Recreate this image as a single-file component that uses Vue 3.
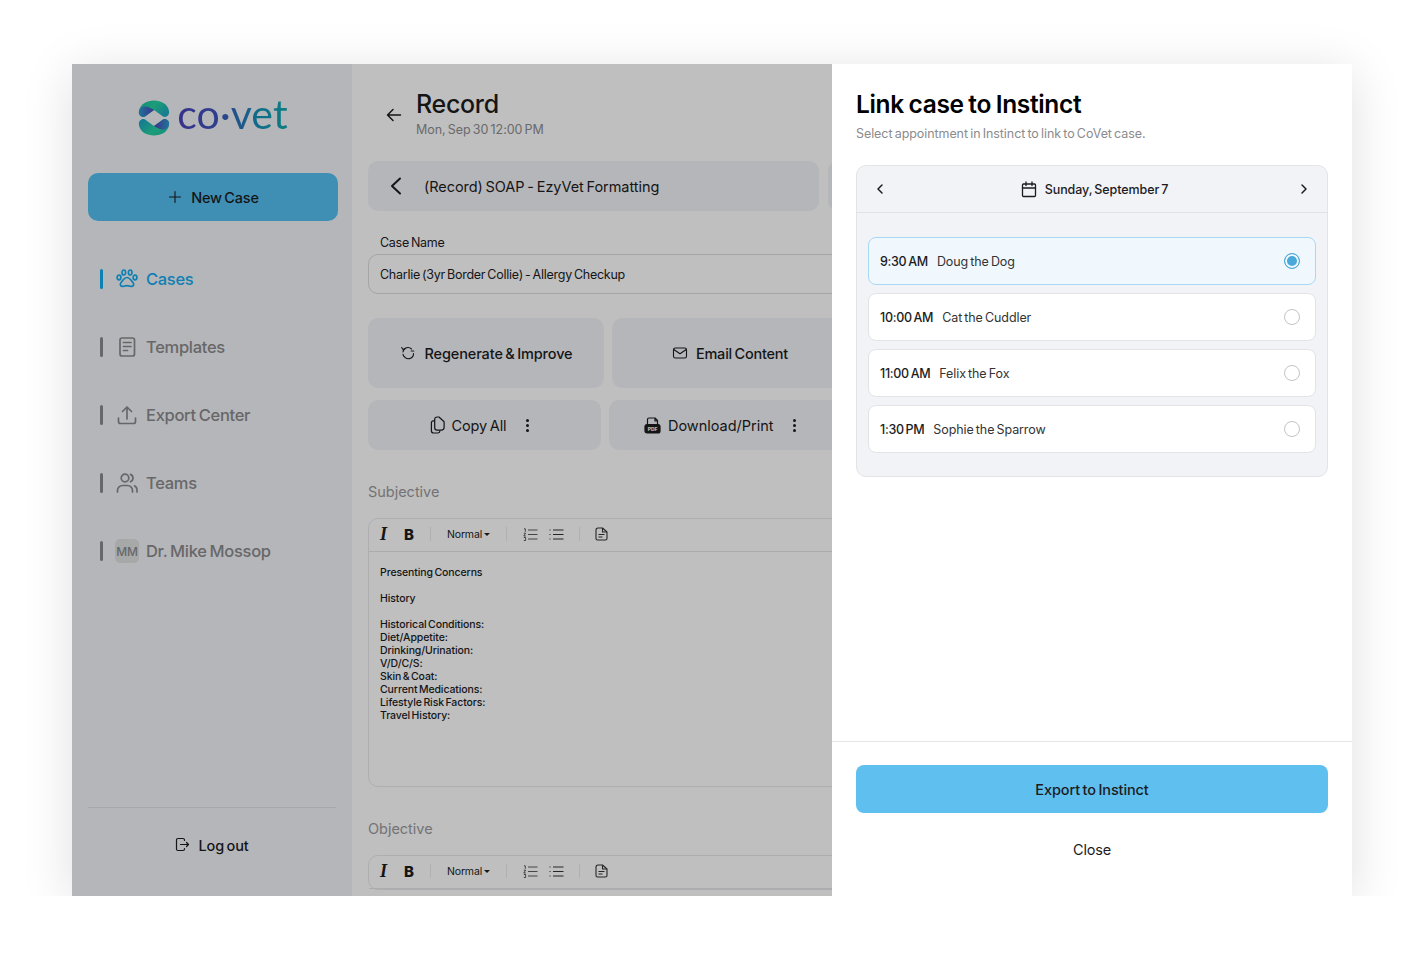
<script setup>
const nav = [
  { label: 'Templates', icon: 'doc' },
  { label: 'Export Center', icon: 'upload' },
  { label: 'Teams', icon: 'users' }
]
const slots = [
  { time: '9:30 AM', name: 'Doug the Dog', selected: true },
  { time: '10:00 AM', name: 'Cat the Cuddler' },
  { time: '11:00 AM', name: 'Felix the Fox' },
  { time: '1:30 PM', name: 'Sophie the Sparrow' }
]
const history = ['Historical Conditions:', 'Diet/Appetite:', 'Drinking/Urination:', 'V/D/C/S:', 'Skin & Coat:', 'Current Medications:', 'Lifestyle Risk Factors:', 'Travel History:']
</script>

<template>
  <div class="stage">
    <div class="behind">
      <aside class="sidebar">
        <div class="logo">
          <svg width="32" height="36" viewBox="0 0 32 36">
            <defs>
              <linearGradient id="lgArch" x1="0" y1="0" x2="1" y2="0.6">
                <stop offset="0" stop-color="#1fb8a8" />
                <stop offset=".5" stop-color="#25d3a0" />
                <stop offset="1" stop-color="#1fa8c0" />
              </linearGradient>
              <linearGradient id="lgLobe" x1="0" y1="0" x2="1" y2="0">
                <stop offset="0" stop-color="#2a9ad0" />
                <stop offset="1" stop-color="#5144b8" />
              </linearGradient>
            </defs>
            <g id="logoTop">
              <path d="M1 11C2 4 9 .5 16 .5S30 4 31 11C32 15 28 18 25 16.500L16 10 7 16.500C4 18 0 15 1 11Z" fill="url(#lgArch)" />
              <path d="M1 11C1.500 8 5 6 8 6.500 11 7 14 9 16 10L7 16.500C4 18 0 15 1 11Z" fill="url(#lgLobe)" />
            </g>
            <g transform="rotate(180 16 18)">
              <path d="M1 11C2 4 9 .5 16 .5S30 4 31 11C32 15 28 18 25 16.500L16 10 7 16.500C4 18 0 15 1 11Z" fill="url(#lgArch)" />
              <path d="M1 11C1.500 8 5 6 8 6.500 11 7 14 9 16 10L7 16.500C4 18 0 15 1 11Z" fill="url(#lgLobe)" />
            </g>
          </svg>
          <span class="wordmark">co·vet</span>
        </div>

        <button class="new-case" type="button">
          <svg width="16" height="16" viewBox="0 0 16 16" fill="none" stroke="#1c1c1e" stroke-width="1.100" stroke-linecap="round"><path d="M8 2.500v11M2.500 8h11" /></svg>
          <span>New Case</span>
        </button>

        <nav class="nav">
          <a class="nav-item active">
            <i class="tick"></i>
            <svg class="nav-icon" width="22" height="22" viewBox="0 0 22 22" fill="none" stroke="currentColor" stroke-width="1.700" stroke-linejoin="round">
              <ellipse cx="7.800" cy="4.500" rx="1.800" ry="2.500" />
              <ellipse cx="14.200" cy="4.500" rx="1.800" ry="2.500" />
              <ellipse cx="3" cy="9.500" rx="1.900" ry="2.300" />
              <ellipse cx="19" cy="9.500" rx="1.900" ry="2.300" />
              <path d="M11 9.500c-2.700 0-3.500 2.300-5 3.800-1.600 1.600-2 2.400-1.700 3.500.4 1.500 2 1.800 3.500 1.400 1-.3 2.200-.6 3.200-.6s2.200.3 3.200.6c1.500.4 3.100.1 3.500-1.400.3-1.100-.1-1.900-1.700-3.500-1.500-1.500-2.300-3.800-5-3.800Z" />
            </svg>
            <span>Cases</span>
          </a>
          <a v-for="item in nav" :key="item.label" class="nav-item">
            <i class="tick"></i>
            <svg class="nav-icon" width="22" height="22" viewBox="0 0 22 22" fill="none" stroke="currentColor" stroke-width="1.700" stroke-linecap="round" stroke-linejoin="round">
              <template v-if="item.icon === 'doc'">
                <rect x="4" y="2" width="14.500" height="18" rx="2" />
                <path d="M7.500 6.500h7.500M7.500 10.500h7.500M7.500 14.500h4" />
              </template>
              <template v-else-if="item.icon === 'upload'">
                <path d="M11 15V3M6.500 7.500 11 3l4.500 4.500" />
                <path d="M2.500 14v3.500a2 2 0 0 0 2 2h13a2 2 0 0 0 2-2V14" />
              </template>
              <template v-else>
                <circle cx="9" cy="6" r="3.800" />
                <path d="M1.500 20v-1.500c0-3 2.500-5 5-5h5c2.500 0 5 2 5 5V20" />
                <path d="M14.500 2.400a4 4 0 0 1 0 7.400M18.500 13.800c1.500.8 2.500 2.500 2.500 4.200v2" />
              </template>
            </svg>
            <span>{{ item.label }}</span>
          </a>
          <a class="nav-item">
            <i class="tick"></i>
            <b class="avatar">MM</b>
            <span>Dr. Mike Mossop</span>
          </a>
        </nav>

        <div class="logout-wrap">
          <div class="logout">
            <svg width="15" height="15" viewBox="0 0 15 15" fill="none" stroke="#1c1c1e" stroke-width="1.200" stroke-linecap="round" stroke-linejoin="round">
              <path d="M9.500 3.500V2.800A1.500 1.500 0 0 0 8 1.500H3A1.500 1.500 0 0 0 1.500 3v9A1.500 1.500 0 0 0 3 13.500h5a1.500 1.500 0 0 0 1.500-1.500v-.5" />
              <path d="M5.500 7.500h8M11.500 5.500l2 2-2 2" />
            </svg>
            <span>Log out</span>
          </div>
        </div>
      </aside>

      <main class="main">
        <header class="rec-head">
          <svg width="18" height="18" viewBox="0 0 18 18" fill="none" stroke="#1c1c1e" stroke-width="1.500" stroke-linecap="round" stroke-linejoin="round"><path d="M15.500 9h-13M8 3.500 2.500 9 8 14.500" /></svg>
          <div>
            <h1>Record</h1>
            <p>Mon, Sep 30 12:00 PM</p>
          </div>
        </header>

        <div class="tab-row">
          <div class="tab">
            <svg width="16" height="20" viewBox="0 0 16 20" fill="none" stroke="#1c1c1e" stroke-width="2" stroke-linecap="round" stroke-linejoin="round"><path d="M12 2.500 4 10l8 7.500" /></svg>
            <span>(Record) SOAP - EzyVet Formatting</span>
          </div>
          <div class="tab tab-next"></div>
        </div>

        <label class="case-label">Case Name</label>
        <div class="case-input">Charlie (3yr Border Collie) - Allergy Checkup</div>

        <div class="actions tall">
          <button class="act a1" type="button">
            <svg width="16" height="16" viewBox="0 0 16 16" fill="none" stroke="#1c1c1e" stroke-width="1.100" stroke-linecap="round" stroke-linejoin="round">
              <path d="M3 7a5 5 0 0 1 8.500-3M13.500 8.500A5 5 0 0 1 5 12.300a5 5 0 0 1-2-3" />
              <path d="M1.700 2.500 3 4.500l2-.8M13.800 6h-2.600" />
            </svg>
            <span>Regenerate &amp; Improve</span>
          </button>
          <button class="act a2" type="button">
            <svg width="16" height="16" viewBox="0 0 16 16" fill="none" stroke="#1c1c1e" stroke-width="1.100" stroke-linejoin="round"><rect x="1.500" y="3" width="13" height="10" rx="1.800" /><path d="M1.800 4.500 8 8.800l6.200-4.300" /></svg>
            <span>Email Content</span>
          </button>
          <div class="act a-rest"></div>
        </div>

        <div class="actions short">
          <button class="act a3" type="button">
            <svg width="16" height="18" viewBox="0 0 17 19" fill="none" stroke="#1c1c1e" stroke-width="1.300" stroke-linejoin="round">
              <path d="M5 3.500a2.500 2.500 0 0 1 2.500-2.500h2l5.500 5v6a3 3 0 0 1-3 3h-4.500a2.500 2.500 0 0 1-2.500-2.500Z" />
              <path d="M5 5H3.500A2 2 0 0 0 1.500 7v8.500a2.500 2.500 0 0 0 2.500 2.500h4.500a2 2 0 0 0 2-2v-1" />
            </svg>
            <span>Copy All</span>
            <i class="dots"><u></u><u></u><u></u></i>
          </button>
          <button class="act a4" type="button">
            <svg class="pdf" width="17" height="17" viewBox="0 0 17 17" fill="none" stroke="#1c1c1e" stroke-width="1.200" stroke-linejoin="round">
              <path d="M3.500 8V2.500a1.500 1.500 0 0 1 1.500-1.500h6l2.500 2.500V8M11 1v3h3" />
              <rect x="1" y="7.500" width="15" height="8.500" rx="2" fill="#1c1c1e" />
              <text x="8.500" y="13.600" text-anchor="middle" class="pdf-text">PDF</text>
            </svg>
            <span>Download/Print</span>
            <i class="dots"><u></u><u></u><u></u></i>
          </button>
        </div>

        <h2 class="section">Subjective</h2>
        <section class="editor first">
          <div class="toolbar">
            <em class="t-i">I</em>
            <strong class="t-b">B</strong>
            <i class="sep s1"></i>
            <span class="t-normal">Normal<u></u></span>
            <i class="sep s2"></i>
            <svg width="15" height="13" viewBox="0 0 15 13" fill="none" stroke="#333" stroke-width="1"><path d="M5 2h9.500M5 6.500h9.500M5 11h9.500M1 .800h1.300v3M.8 5.200h1.800L.8 8h2M.8 9.500h1.800v3H.8" stroke-width=".8" /></svg>
            <svg class="t-ul" width="15" height="13" viewBox="0 0 15 13" fill="none" stroke="#333" stroke-width="1"><path d="M4 2h10.500M4 6.500h10.500M4 11h10.500M1 1.500v1M1 6v1M1 10.500v1" /></svg>
            <i class="sep s3"></i>
            <svg width="13" height="14" viewBox="0 0 13 14" fill="none" stroke="#333" stroke-width="1.100" stroke-linejoin="round"><path d="M1 3a2 2 0 0 1 2-2h4.500L12 5v6.500a1.500 1.500 0 0 1-1.500 1.500h-8A1.500 1.500 0 0 1 1 11.500Z" /><path d="M7.500 1v4H12M3.500 7.500h6M3.500 10h4" /></svg>
          </div>
          <div class="ed-body">
            <p class="gap">Presenting Concerns</p>
            <p class="gap">History</p>
            <p v-for="line in history" :key="line">{{ line }}</p>
          </div>
        </section>

        <h2 class="section second">Objective</h2>
        <section class="editor">
          <div class="toolbar">
            <em class="t-i">I</em>
            <strong class="t-b">B</strong>
            <i class="sep s1"></i>
            <span class="t-normal">Normal<u></u></span>
            <i class="sep s2"></i>
            <svg width="15" height="13" viewBox="0 0 15 13" fill="none" stroke="#333" stroke-width="1"><path d="M5 2h9.500M5 6.500h9.500M5 11h9.500M1 .800h1.300v3M.8 5.200h1.800L.8 8h2M.8 9.500h1.800v3H.8" stroke-width=".8" /></svg>
            <svg class="t-ul" width="15" height="13" viewBox="0 0 15 13" fill="none" stroke="#333" stroke-width="1"><path d="M4 2h10.500M4 6.500h10.500M4 11h10.500M1 1.500v1M1 6v1M1 10.500v1" /></svg>
            <i class="sep s3"></i>
            <svg width="13" height="14" viewBox="0 0 13 14" fill="none" stroke="#333" stroke-width="1.100" stroke-linejoin="round"><path d="M1 3a2 2 0 0 1 2-2h4.500L12 5v6.500a1.500 1.500 0 0 1-1.500 1.500h-8A1.500 1.500 0 0 1 1 11.500Z" /><path d="M7.500 1v4H12M3.500 7.500h6M3.500 10h4" /></svg>
          </div>
        </section>
      </main>
    </div>

    <aside class="panel">
      <div class="panel-body">
        <h2 class="panel-title">Link case to Instinct</h2>
        <p class="panel-sub">Select appointment in Instinct to link to CoVet case.</p>

        <div class="cal">
          <div class="cal-head">
            <svg width="10" height="12" viewBox="0 0 10 12" fill="none" stroke="#1c1c1e" stroke-width="1.500" stroke-linecap="round" stroke-linejoin="round"><path d="M7 2 3 6l4 4" /></svg>
            <div class="cal-date">
              <svg width="16" height="17" viewBox="0 0 16 17" fill="none" stroke="#1c1c1e" stroke-width="1.300" stroke-linecap="round" stroke-linejoin="round"><rect x="1.500" y="3" width="13" height="12.500" rx="1" /><path d="M1.500 7h13M5 1v3.500M11 1v3.500" /></svg>
              <span>Sunday, September 7</span>
            </div>
            <svg width="10" height="12" viewBox="0 0 10 12" fill="none" stroke="#1c1c1e" stroke-width="1.500" stroke-linecap="round" stroke-linejoin="round"><path d="m3 2 4 4-4 4" /></svg>
          </div>
          <ul class="slots">
            <li v-for="s in slots" :key="s.time" class="slot" :class="{ on: s.selected }">
              <span class="time">{{ s.time }}</span>
              <span class="pet">{{ s.name }}</span>
              <i class="radio"></i>
            </li>
          </ul>
        </div>
      </div>

      <footer class="panel-foot">
        <button class="export" type="button">Export to Instinct</button>
        <div class="close">Close</div>
      </footer>
    </aside>
  </div>
</template>

<style>
html, body { margin: 0; background: #fff; }
</style>

<style scoped>
* { box-sizing: border-box; }
h1, h2, p, ul { margin: 0; padding: 0; }
.stage {
  width: 1280px;
  height: 832px;
  margin: 64px 0 0 72px;
  display: flex;
  font-family: Inter, "Liberation Sans", sans-serif;
  color: #1c1c1e;
  word-spacing: -1.200px;
  box-shadow: 0 8px 48px rgba(0, 0, 0, .13);
}
button { font-family: inherit; border: 0; color: inherit; padding: 0; word-spacing: inherit; }

.behind { position: relative; width: 760px; height: 832px; display: flex; overflow: hidden; background: #fff; }
.behind::after { content: ""; position: absolute; inset: 0; background: rgba(0, 0, 0, .25); }

.sidebar { width: 280px; flex: none; background: #f2f3f7; padding: 36px 14px 0 16px; display: flex; flex-direction: column; }
.logo { display: flex; align-items: center; justify-content: center; gap: 7px; height: 36px; }
.wordmark {
  font-family: Lato, sans-serif;
  font-weight: 400;
  font-size: 41px;
  line-height: 44px;
  letter-spacing: .1px;
  margin-bottom: 8px;
  background: linear-gradient(90deg, #4a42b8 0%, #3c58bc 40%, #1494b8 75%, #12a8ac 100%);
  -webkit-background-clip: text;
  background-clip: text;
  color: transparent;
}
.new-case { margin-top: 37px; width: 250px; height: 48px; border-radius: 10px; background: #54bff1; display: flex; align-items: center; justify-content: center; gap: 8px; font-size: 14.500px; font-weight: 500; letter-spacing: -.2px; }

.nav { margin-top: 24px; display: flex; flex-direction: column; }
.nav-item { height: 68px; display: flex; align-items: center; padding-left: 12px; color: #8a8a8c; font-size: 16.500px; font-weight: 500; letter-spacing: -.3px; }
.nav-item.active { color: #14abf0; }
.tick { width: 3px; height: 20px; border-radius: 2px; background: currentColor; flex: none; }
.nav-icon { margin-left: 13px; flex: none; }
.nav-item > span { margin-left: 8px; }
.avatar { margin-left: 12px; width: 24px; height: 24px; border-radius: 5px; background: #dfe1e0; color: #8a8a8c; font-size: 12px; font-weight: 500; letter-spacing: -.3px; display: flex; align-items: center; justify-content: center; flex: none; }
.nav-item > .avatar + span { margin-left: 7px; }

.logout-wrap { margin-top: auto; height: 89px; width: 248px; border-top: 1px solid #e0e1e5; display: flex; align-items: center; justify-content: center; padding-bottom: 13px; }
.logout { display: flex; align-items: center; gap: 8px; font-size: 14.500px; font-weight: 500; letter-spacing: -.13px; }
.logout svg { position: relative; top: -1px; }

.main { width: 720px; flex: none; padding: 0 0 0 16px; background: #fff; }
.rec-head { display: flex; align-items: center; gap: 13px; height: 97px; padding: 3px 0 0 17px; }
.rec-head svg { margin-top: 1px; }
.rec-head h1 { font-size: 25px; line-height: 30px; font-weight: 500; letter-spacing: -.3px; }
.rec-head p { font-size: 12.500px; line-height: 18px; margin-top: 2px; color: #8e8e90; letter-spacing: -.06px; }

.tab-row { display: flex; gap: 9px; }
.tab { width: 451px; height: 50px; border-radius: 10px; background: #f2f3f7; display: flex; align-items: center; gap: 20px; padding-left: 20px; font-size: 14.500px; font-weight: 400; letter-spacing: -.06px; flex: none; }
.tab-next { width: 200px; }

.case-label { display: block; margin-top: 24px; padding-left: 12px; font-size: 12.500px; line-height: 16px; letter-spacing: -.29px; }
.case-input { margin-top: 3px; width: 660px; height: 40px; border: 1px solid #dcdcde; border-radius: 10px; display: flex; align-items: center; padding-left: 11px; font-size: 12.500px; letter-spacing: -.26px; }

.actions { display: flex; }
.tall { margin-top: 24px; gap: 8px; }
.short { margin-top: 12px; gap: 8px; }
.act { height: 50px; border-radius: 10px; background: #f2f3f7; display: flex; align-items: center; justify-content: center; font-size: 14.500px; font-weight: 500; flex: none; }
.tall .act { height: 70px; }
.a1 { width: 236px; gap: 9px; letter-spacing: -.13px; }
.a2 { width: 236px; gap: 8px; letter-spacing: -.21px; }
.a-rest { width: 200px; }
.a3 { width: 233px; gap: 6px; padding-right: 10px; font-weight: 400; letter-spacing: -.13px; }
.a4 { width: 250px; gap: 7px; justify-content: flex-start; padding-left: 35px; font-weight: 400; letter-spacing: -.02px; }
.dots { display: flex; flex-direction: column; gap: 2px; margin-left: 14px; }
.a4 .dots { margin-left: 13px; }
.dots u { width: 3px; height: 3px; border-radius: 50%; background: #1c1c1e; display: block; }
.pdf-text { font-size: 5px; font-weight: 800; fill: #f2f3f7; stroke: none; letter-spacing: -.1px; }

.section { margin-top: 33px; font-size: 14.500px; line-height: 18px; font-weight: 400; color: #9a9a9c; letter-spacing: -.02px; }
.editor { margin-top: 17px; width: 660px; border: 1px solid #e9e9ec; border-radius: 10px; }
.editor.first { height: 269px; }
.toolbar { height: 33px; border-bottom: 1px solid #e6e6e8; display: flex; align-items: center; padding: 0 0 2px 11px; }
.t-i { width: 24px; font: italic 700 18px/1 "Liberation Serif", serif; }
.t-b { width: 25px; font-size: 15px; font-weight: 800; }
.sep { width: 1px; height: 14px; background: #ebebed; flex: none; }
.s1 { margin-left: 1px; }
.t-normal { margin-left: 16px; font-size: 10.500px; letter-spacing: -.15px; display: flex; align-items: center; gap: 2px; color: #222; }
.t-normal u { width: 0; height: 0; border: 3px solid transparent; border-top: 3px solid #222; border-bottom: 0; display: block; }
.s2 { margin: 0 16px; }
.t-ul { margin-left: 11px; }
.s3 { margin: 0 15px; }
.ed-body { padding: 14px 0 0 11px; font-size: 10.500px; line-height: 13px; font-weight: 500; letter-spacing: -.1px; }
.ed-body .gap { margin-bottom: 13px; }

.panel { width: 520px; flex: none; background: #fff; display: flex; flex-direction: column; }
.panel-body { flex: 1; padding: 24px 24px 0; }
.panel-title { font-size: 24.500px; line-height: 32px; font-weight: 600; letter-spacing: -.33px; color: #000; }
.panel-sub { margin-top: 5px; font-size: 12.500px; line-height: 18px; color: #8b8b8d; letter-spacing: -.07px; }
.cal { margin-top: 22px; border: 1px solid #e3e4e8; border-radius: 10px; background: #f2f3f7; height: 312px; }
.cal-head { height: 47px; display: flex; align-items: center; justify-content: space-between; padding: 0 18px; border-bottom: 1px solid #e1e2e6; }
.cal-date { display: flex; align-items: center; gap: 8px; margin-left: 5px; font-size: 12.500px; font-weight: 500; letter-spacing: -.08px; }
.slots { list-style: none; padding: 24px 11px 0; display: flex; flex-direction: column; gap: 8px; }
.slot { height: 48px; border: 1px solid #e3e4e8; border-radius: 8px; background: #fff; display: flex; align-items: center; padding: 0 15px 0 11px; font-size: 12.500px; }
.slot.on { background: #f0f8fe; border-color: #a6d9f3; }
.time { font-weight: 500; letter-spacing: -.3px; }
.pet { margin-left: 9px; color: #333; letter-spacing: -.1px; }
.radio { margin-left: auto; width: 16px; height: 16px; border-radius: 50%; border: 1px solid #c4c4c6; background: #fff; }
.slot.on .radio { border: 1.500px solid #4aa9d8; background: #4aa9d8; box-shadow: inset 0 0 0 2px #f0f8fe; }

.panel-foot { height: 155px; border-top: 1px solid #e5e5e7; padding: 23px 24px 0; }
.export { width: 100%; height: 48px; border-radius: 8px; background: #5fbfee; font-size: 14.500px; font-weight: 500; letter-spacing: -.11px; display: block; }
.close { margin-top: 26px; text-align: center; font-size: 14.500px; line-height: 22px; letter-spacing: -.2px; }
</style>
